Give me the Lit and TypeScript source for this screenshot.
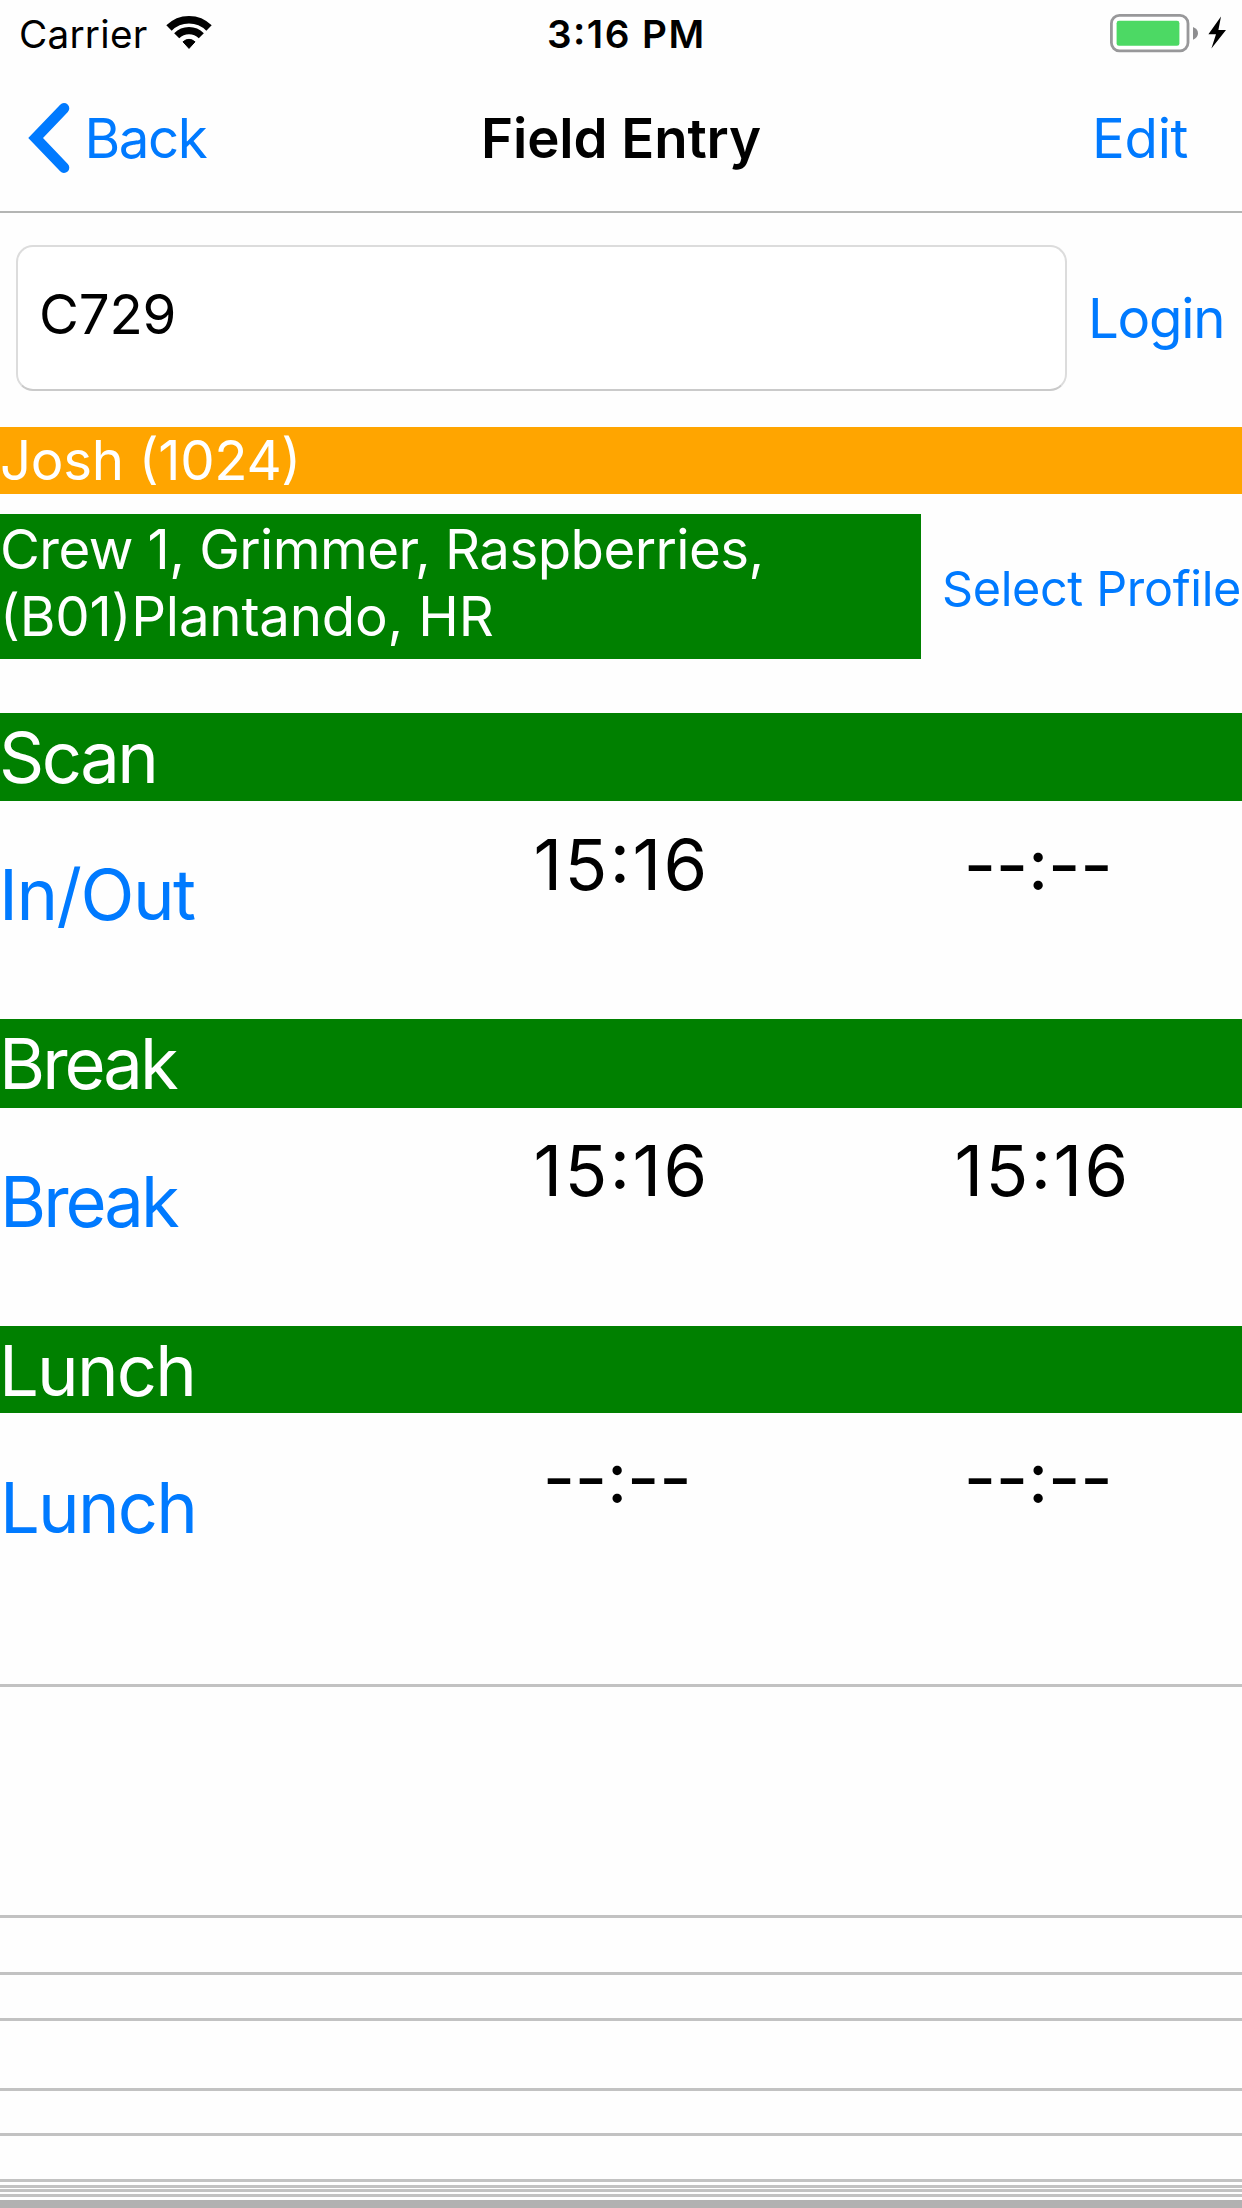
import { LitElement, html, css } from "lit";
import { customElement, property } from "lit/decorators.js";

interface Section {
  id: string;
  title: string;
  action: string;
  start: string;
  end: string;
}

const EMPTY = "--:--";

const SECTIONS: Section[] = [
  { id: "scan", title: "Scan", action: "In/Out", start: "15:16", end: EMPTY },
  { id: "break", title: "Break", action: "Break", start: "15:16", end: "15:16" },
  { id: "lunch", title: "Lunch", action: "Lunch", start: EMPTY, end: EMPTY },
];

/* Heights of the empty list rows, each closed by a separator. */
const EMPTY_ROWS = [228, 54, 43, 67, 42, 43, 3, 1, 2];

@customElement("status-bar")
class StatusBar extends LitElement {
  static styles = css`
    :host {
      display: grid;
      grid-template-columns: 547px 1fr auto;
      height: 68px;
      font-size: 38.7px;
      line-height: 68px;
    }
    .carrier {
      display: flex;
      padding-left: 19px;
      letter-spacing: 0.24px;
    }
    .wifi {
      width: 48px;
      height: 36px;
      margin: 15px 0 0 17.5px;
    }
    .time {
      font-weight: 560;
      letter-spacing: 1.45px;
    }
    .battery {
      width: 120px;
      height: 44px;
      margin: 11px 12px 0 0;
    }
  `;
  render() {
    return html`
      <div class="carrier">
        <span>Carrier</span>
        <svg class="wifi" viewBox="166 15 48 36" fill="none" stroke="#000" stroke-width="7.6">
          <path d="M170 28A28.2 28.2 0 0 1 210 28" />
          <path d="M177.7 35.8A17.4 17.4 0 0 1 202.3 35.8" stroke-width="7.2" />
          <path d="M184 41.8Q190 36.9 196 41.8L190 48.4Z" fill="#000" stroke-width="1" stroke-linejoin="round" />
        </svg>
      </div>
      <div class="time">3:16 PM</div>
      <svg class="battery" viewBox="1110 11 120 44">
        <rect x="1111.4" y="15.4" width="76.6" height="35.4" rx="8" fill="#fff" stroke="#98989a" stroke-width="2.8" />
        <rect x="1116.6" y="20.8" width="62.8" height="25" rx="2.4" fill="#4cd964" />
        <path d="M1193 27Q1198 29 1198 33.3T1193 39.8Z" fill="#8e8e90" />
        <path d="M1221 16.6L1208.4 34.2H1216L1211.4 48.6L1226 30H1218.4Z" fill="#000" />
      </svg>
    `;
  }
}

@customElement("nav-bar")
class NavBar extends LitElement {
  static styles = css`
    :host {
      display: grid;
      grid-template-columns: 481px 611px 1fr;
      box-sizing: border-box;
      height: 145px;
      border-bottom: 2px solid #b4b5b4;
      font-size: 54.6px;
      line-height: 141px;
    }
    .back {
      display: flex;
      padding-left: 26px;
      color: #007aff;
      letter-spacing: -1.4px;
    }
    .chevron {
      width: 46px;
      height: 76px;
      margin: 32px 12.5px 0 0;
    }
    .title {
      font-weight: 600;
      letter-spacing: -0.1px;
    }
    .edit {
      color: #007aff;
      letter-spacing: -0.3px;
    }
  `;
  render() {
    return html`
      <div class="back">
        <svg class="chevron" viewBox="26 100 46 76" fill="none" stroke="#007aff" stroke-width="10.6" stroke-linecap="round">
          <path d="M64 108.4L35.6 138L64 167.6" />
        </svg>
        <span>Back</span>
      </div>
      <div class="title">Field Entry</div>
      <div class="edit">Edit</div>
    `;
  }
}

@customElement("punch-section")
class PunchSection extends LitElement {
  @property({ attribute: false }) section!: Section;

  static styles = css`
    :host {
      display: block;
      font-size: 70.5px;
      white-space: nowrap;
    }
    .scan {
      height: 306px;
    }
    .break {
      height: 307px;
    }
    .header {
      height: 88px;
      line-height: 89px;
      background: #008000;
      color: #fff;
    }
    .header span,
    .action span {
      display: inline-block;
    }
    .row {
      display: grid;
      grid-template-columns: 411px 421px 421px;
    }
    .action {
      color: #007aff;
      line-height: 188px;
    }
    .time {
      line-height: 127px;
      text-align: center;
      letter-spacing: 2.4px;
    }
    .blank {
      letter-spacing: -0.27px;
      line-height: 128px;
      padding-right: 9px;
    }
    .scan .header {
      letter-spacing: -2.5px;
    }
    .scan .header span,
    .scan .action span,
    .break .header span,
    .lunch .header span {
      margin-left: -1px;
    }
    .scan .action {
      letter-spacing: -1.5px;
    }
    .break .header,
    .break .action {
      letter-spacing: -3px;
    }
    .break .header {
      height: 89px;
    }
    .break .row {
      margin-top: -1px;
    }
    .break .action {
      line-height: 189px;
    }
    .lunch .header,
    .lunch .action {
      letter-spacing: -1.8px;
    }
    .lunch .header {
      height: 87px;
    }
    .lunch .row {
      padding-top: 1px;
    }
  `;

  private time(value: string) {
    return html`<div class=${value === EMPTY ? "time blank" : "time"}>${value}</div>`;
  }

  render() {
    const s = this.section;
    return html`
      <div class=${s.id}>
        <div class="header"><span>${s.title}</span></div>
        <div class="row">
          <div class="action"><span>${s.action}</span></div>
          ${this.time(s.start)}${this.time(s.end)}
        </div>
      </div>
    `;
  }
}

@customElement("app-root")
class AppRoot extends LitElement {
  static styles = css`
    :host {
      display: flex;
      flex-direction: column;
      width: 1242px;
      height: 2208px;
      overflow: hidden;
      background: #fefefe;
      color: #000;
      font-family: Inter, "Liberation Sans", sans-serif;
      font-feature-settings: "calt" 1;
      white-space: nowrap;
    }
    .login {
      display: flex;
      padding: 32px 0 36px 16px;
      font-size: 54.6px;
    }
    .field {
      box-sizing: border-box;
      width: 1051px;
      height: 146px;
      border: 2px solid #dcdcdc;
      border-bottom-color: #cacaca;
      border-radius: 17px;
      padding-left: 21px;
      background: #fff;
      line-height: 135px;
      letter-spacing: -0.15px;
    }
    .login-button {
      margin-left: 21px;
      color: #007aff;
      line-height: 146px;
      letter-spacing: -1.25px;
    }
    .employee {
      height: 67px;
      background: #ffa500;
      color: #fff;
      font-size: 54.6px;
      line-height: 66px;
      letter-spacing: -0.33px;
    }
    .profile {
      display: flex;
      margin: 20px 0 54px;
      height: 145px;
    }
    .crew {
      box-sizing: border-box;
      width: 921px;
      padding-top: 2px;
      background: #008000;
      color: #fff;
      font-size: 54.6px;
      line-height: 66.7px;
      letter-spacing: -0.57px;
      white-space: normal;
    }
    .crew-unit {
      letter-spacing: -0.2px;
    }
    .select {
      margin-left: 21px;
      color: #007aff;
      font-size: 48.5px;
      line-height: 150px;
      letter-spacing: -0.35px;
    }
    .sections {
      height: 971px;
    }
    .empty-row {
      border-bottom: 3px solid #c2c2c2;
    }
    .footer {
      flex: 1;
      margin-top: 3px;
      background: #b1b1b1;
    }
  `;

  render() {
    return html`
      <status-bar></status-bar>
      <nav-bar></nav-bar>
      <div class="login">
        <div class="field">C729</div>
        <div class="login-button">Login</div>
      </div>
      <div class="employee">Josh (1024)</div>
      <div class="profile">
        <div class="crew">Crew 1, Grimmer, Raspberries, <span class="crew-unit">(B01)Plantando, HR</span></div>
        <div class="select">Select Profile</div>
      </div>
      <div class="sections">${SECTIONS.map((s) => html`<punch-section .section=${s}></punch-section>`)}</div>
      <div class="empty-row"></div>
      ${EMPTY_ROWS.map((h) => html`<div class="empty-row" style="height:${h}px"></div>`)}
      <div class="footer"></div>
    `;
  }
}
